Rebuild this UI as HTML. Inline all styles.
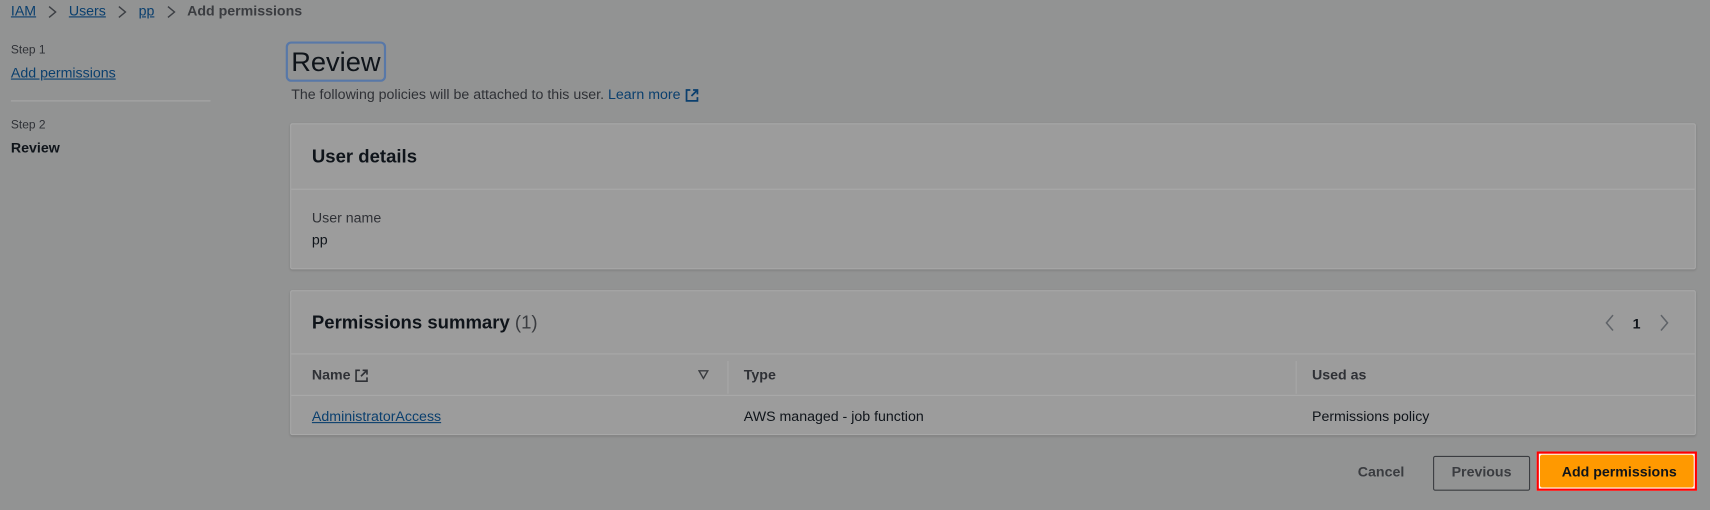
<!DOCTYPE html>
<html><head><style>
*{margin:0;padding:0;box-sizing:border-box}
html,body{width:1710px;height:510px;overflow:hidden;background:#929393}
#w{position:absolute;left:0;top:0;width:1568px;height:468px;transform:scale(1.0906);transform-origin:0 0;font-family:"Liberation Sans",sans-serif;color:#0f141a}
.a{position:absolute;white-space:nowrap}
.lk{color:#0a3f6e;text-decoration:underline}
.card{position:absolute;left:266px;width:1289px;background:#9c9c9c;border:1px solid #a8a8a8;border-radius:2px;box-shadow:0 1px 2px rgba(0,0,0,.15)}
.hl{position:absolute;left:0;right:0;height:1px;background:#a9a9a9}
.b{font-weight:bold}
svg{display:inline-block;vertical-align:middle}
</style></head><body><div id="w">
<div class="a" style="left:10px;top:2px;font-size:13px"><span class="lk">IAM</span><svg width="30" height="14" viewBox="0 0 30 14"><path d="M12 2l6 5-6 5" fill="none" stroke="#3c3f44" stroke-width="1.3"/></svg><span class="lk">Users</span><svg width="30" height="14" viewBox="0 0 30 14"><path d="M12 2l6 5-6 5" fill="none" stroke="#3c3f44" stroke-width="1.3"/></svg><span class="lk">pp</span><svg width="30" height="14" viewBox="0 0 30 14"><path d="M12 2l6 5-6 5" fill="none" stroke="#3c3f44" stroke-width="1.3"/></svg><span class="b" style="color:#3a3c40">Add permissions</span></div>
<div class="a" style="left:10px;top:40px;font-size:11px;color:#2f3136">Step 1</div>
<div class="a lk" style="left:10px;top:59px;font-size:13px">Add permissions</div>
<div class="a" style="left:10px;top:92px;width:183px;height:1px;background:#a8a8a8"></div>
<div class="a" style="left:10px;top:109px;font-size:11px;color:#2f3136">Step 2</div>
<div class="a b" style="left:10px;top:128px;font-size:13px">Review</div>
<div class="a" style="left:262px;top:38px;width:92px;height:37px;border:2px solid #5878a8;border-radius:5px"></div>
<div class="a" style="left:267px;top:43px;font-size:25px">Review</div>
<div class="a" style="left:267px;top:79px;font-size:13px;color:#2f3136">The following policies will be attached to this user. <span style="color:#0a3f6e">Learn more <svg width="13" height="13" viewBox="0 0 13 13"><path d="M5 1.5H1.5v10h10V8M7.5 1.5h4v4M11.5 1.5L6 7" fill="none" stroke="#0a3f6e" stroke-width="1.6"/></svg></span></div>
<div class="card" style="top:113px;height:134px">
<div class="a b" style="left:19px;top:20px;font-size:17px">User details</div>
<div class="hl" style="top:59px"></div>
<div class="a" style="left:19px;top:78px;font-size:13px;color:#2f3136">User name</div>
<div class="a" style="left:19px;top:98px;font-size:13px">pp</div>
</div>
<div class="card" style="top:266px;height:133px">
<div class="a b" style="left:19px;top:19px;font-size:17px">Permissions summary <span style="color:#3a3c40;font-weight:normal">(1)</span></div>
<svg class="a" style="left:1202px;top:20px" width="14" height="18" viewBox="0 0 14 18"><path d="M10 2L4 9l6 7" fill="none" stroke="#5f6368" stroke-width="1.4"/></svg>
<div class="a b" style="left:1230px;top:22px;font-size:13px">1</div>
<svg class="a" style="left:1252px;top:20px" width="14" height="18" viewBox="0 0 14 18"><path d="M4 2l6 7-6 7" fill="none" stroke="#5f6368" stroke-width="1.4"/></svg>
<div class="hl" style="top:57px"></div>
<div class="a b" style="left:19px;top:69px;font-size:13px;color:#2f3136">Name <svg width="13" height="13" viewBox="0 0 13 13"><path d="M5 1.5H1.5v10h10V8M7.5 1.5h4v4M11.5 1.5L6 7" fill="none" stroke="#2f3136" stroke-width="1.5"/></svg></div>
<svg class="a" style="left:373px;top:72px" width="10" height="9" viewBox="0 0 10 9"><path d="M1 1h8L5 8z" fill="none" stroke="#3a3c40" stroke-width="1.3"/></svg>
<div class="a" style="left:400px;top:64px;width:1px;height:30px;background:#a8a8a8"></div>
<div class="a b" style="left:415px;top:69px;font-size:13px;color:#2f3136">Type</div>
<div class="a" style="left:921px;top:64px;width:1px;height:30px;background:#a8a8a8"></div>
<div class="a b" style="left:936px;top:69px;font-size:13px;color:#2f3136">Used as</div>
<div class="hl" style="top:95px"></div>
<div class="a lk" style="left:19px;top:107px;font-size:13px">AdministratorAccess</div>
<div class="a" style="left:415px;top:107px;font-size:13px">AWS managed - job function</div>
<div class="a" style="left:936px;top:107px;font-size:13px">Permissions policy</div>
</div>
<div class="a b" style="left:1245px;top:425px;font-size:13px;color:#3a3c40">Cancel</div>
<div class="a" style="left:1314px;top:418px;width:89px;height:32px;border:1px solid #3a3c40;border-radius:2px"></div>
<div class="a b" style="left:1331px;top:425px;font-size:13px;color:#3a3c40">Previous</div>
<div class="a" style="left:1409px;top:414px;width:147px;height:36px;border:2px solid #ff0000;background:#fff;padding:1px"><div style="width:100%;height:100%;background:#ff9900;border-radius:2px"></div></div>
<div class="a b" style="left:1432px;top:425px;font-size:13px">Add permissions</div>
</div></body></html>
